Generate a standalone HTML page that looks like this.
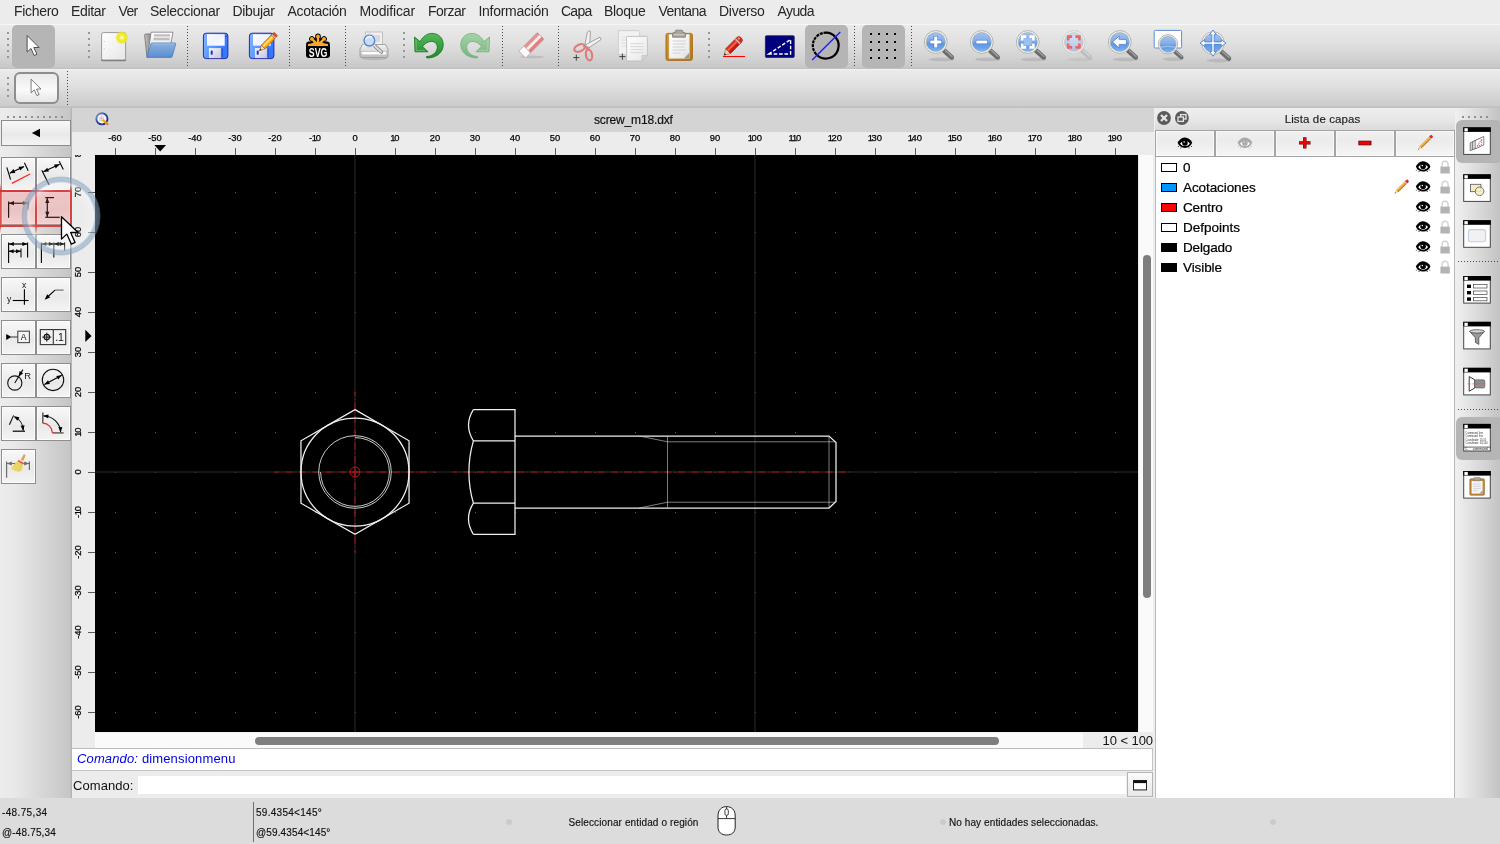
<!DOCTYPE html>
<html lang="es"><head><meta charset="utf-8"><title>screw_m18.dxf</title>
<style>
html,body{margin:0;padding:0;background:#ececec;}
body{width:1500px;height:844px;overflow:hidden;font-family:"Liberation Sans",sans-serif;color:#000;}
#app{position:relative;width:1500px;height:844px;overflow:hidden;background:transparent;will-change:transform;transform:translateZ(0);}
.abs{position:absolute;}
.mi{position:absolute;top:1.5px;height:18px;line-height:18px;font-size:14px;white-space:nowrap;color:#262626;}
svg{position:absolute;overflow:visible;}
.tb1{position:absolute;left:0;top:23.5px;width:1500px;height:44.5px;box-sizing:border-box;border-top:1px solid #f6f6f6;background:linear-gradient(#eaeaea 0,#e1e1e1 40%,#d3d3d3 75%,#c7c7c7 100%);}
.tb2{position:absolute;left:0;top:68.5px;width:1500px;height:38.5px;background:linear-gradient(#ebebeb 0,#e1e1e1 40%,#d4d4d4 72%,#cbcbcb 100%);border-top:1px solid #f2f2f2;box-sizing:border-box;}
.vdots{position:absolute;width:1px;background:repeating-linear-gradient(180deg,#4a4a4a 0,#4a4a4a 1px,transparent 1px,transparent 3px);}
.hdots{position:absolute;height:1px;background:repeating-linear-gradient(90deg,#4a4a4a 0,#4a4a4a 1px,transparent 1px,transparent 3px);}
.lbtn{position:absolute;box-sizing:border-box;border:1px solid #a9a9a9;background:linear-gradient(#f8f8f8,#eeeeee 40%,#e9e9e9 55%,#f4f4f4);}
.lay{position:absolute;left:1183px;margin-top:0.6px;font-size:13.5px;line-height:20px;height:20px;white-space:nowrap;color:#000;-webkit-text-stroke:0.22px #000;}
.sw{position:absolute;left:1161px;width:16px;height:9px;box-sizing:border-box;border:1px solid #000;}
.st{position:absolute;font-size:10px;line-height:12px;white-space:nowrap;color:#111;letter-spacing:0.2px;-webkit-text-stroke:0.15px #111;}
.rl{position:absolute;font-size:9.4px;line-height:10px;white-space:nowrap;color:#000;-webkit-text-stroke:0.25px #000;text-align:center;width:30px;}
.rv{position:absolute;font-size:9.4px;line-height:10px;white-space:nowrap;color:#000;-webkit-text-stroke:0.25px #000;text-align:center;width:30px;height:10px;transform:rotate(-90deg);transform-origin:center center;}
</style></head><body>
<div id="app">
<div class="abs" style="left:0;top:0;width:1500px;height:22px;background:#ececec;"></div>
<div class="mi" id="m_Fichero" style="left:14px;letter-spacing:-0.312px;">Fichero</div>
<div class="mi" id="m_Editar" style="left:71px;letter-spacing:-0.346px;">Editar</div>
<div class="mi" id="m_Ver" style="left:118.5px;letter-spacing:-0.672px;">Ver</div>
<div class="mi" id="m_Seleccionar" style="left:150px;letter-spacing:-0.287px;">Seleccionar</div>
<div class="mi" id="m_Dibujar" style="left:232.5px;letter-spacing:-0.337px;">Dibujar</div>
<div class="mi" id="m_Acotación" style="left:287.5px;letter-spacing:-0.276px;">Acotación</div>
<div class="mi" id="m_Modificar" style="left:359.5px;letter-spacing:-0.144px;">Modificar</div>
<div class="mi" id="m_Forzar" style="left:428px;letter-spacing:-0.492px;">Forzar</div>
<div class="mi" id="m_Información" style="left:478.5px;letter-spacing:-0.287px;">Información</div>
<div class="mi" id="m_Capa" style="left:561px;letter-spacing:-0.742px;">Capa</div>
<div class="mi" id="m_Bloque" style="left:604px;letter-spacing:-0.349px;">Bloque</div>
<div class="mi" id="m_Ventana" style="left:658.5px;letter-spacing:-0.556px;">Ventana</div>
<div class="mi" id="m_Diverso" style="left:719px;letter-spacing:-0.281px;">Diverso</div>
<div class="mi" id="m_Ayuda" style="left:777.5px;letter-spacing:-0.591px;">Ayuda</div>
<svg width="0" height="0" style="left:0;top:0"><defs>
<linearGradient id="gPaper" x1="0" y1="0" x2="1" y2="1"><stop offset="0" stop-color="#ffffff"/><stop offset="1" stop-color="#e6e6e6"/></linearGradient>
<linearGradient id="gFolder" x1="0" y1="0" x2="0" y2="1"><stop offset="0" stop-color="#8ab0e0"/><stop offset="0.5" stop-color="#74a0d8"/><stop offset="1" stop-color="#5a8cd0"/></linearGradient>
<linearGradient id="gFBack" x1="0" y1="0" x2="1" y2="0"><stop offset="0" stop-color="#c4c4c4"/><stop offset="1" stop-color="#7c7c7c"/></linearGradient>
<linearGradient id="gFPaper" x1="0" y1="0" x2="0" y2="1"><stop offset="0" stop-color="#ffffff"/><stop offset="1" stop-color="#d4d4d4"/></linearGradient>
<linearGradient id="gFloppy" x1="0" y1="0" x2="1" y2="0.3"><stop offset="0" stop-color="#86b6ff"/><stop offset="0.45" stop-color="#5a98ff"/><stop offset="1" stop-color="#3478ff"/></linearGradient>
<linearGradient id="gShut" x1="0" y1="0" x2="1" y2="1"><stop offset="0" stop-color="#f6f6f8"/><stop offset="1" stop-color="#c4c6d6"/></linearGradient>
<linearGradient id="gLabel" x1="0" y1="0" x2="1" y2="1"><stop offset="0" stop-color="#ffffff"/><stop offset="0.5" stop-color="#eef2ff"/><stop offset="1" stop-color="#ffffff"/></linearGradient>
<radialGradient id="gGlow"><stop offset="0" stop-color="#ffffff"/><stop offset="0.18" stop-color="#fbf7a0"/><stop offset="0.4" stop-color="#f2ea28"/><stop offset="0.75" stop-color="#f0e820" stop-opacity="0.85"/><stop offset="1" stop-color="#f0e820" stop-opacity="0"/></radialGradient>
<linearGradient id="gUndo" x1="0" y1="0" x2="0" y2="1"><stop offset="0" stop-color="#58b85a"/><stop offset="1" stop-color="#1f8a2c"/></linearGradient>
<linearGradient id="gRedo" x1="0" y1="0" x2="0" y2="1"><stop offset="0" stop-color="#a6d3a8"/><stop offset="1" stop-color="#74b67c"/></linearGradient>
<linearGradient id="gLens" x1="0" y1="0" x2="0" y2="1"><stop offset="0" stop-color="#8ab2ea"/><stop offset="0.5" stop-color="#5c94e2"/><stop offset="0.8" stop-color="#6aa2ea"/><stop offset="1" stop-color="#86b6f0"/></linearGradient>
<radialGradient id="gLensD" cx="0.5" cy="0.25" r="0.8"><stop offset="0" stop-color="#d3e0f2"/><stop offset="1" stop-color="#a9c0e2"/></radialGradient>
<linearGradient id="gClip" x1="0" y1="0" x2="1" y2="1"><stop offset="0" stop-color="#d0902c"/><stop offset="1" stop-color="#b87818"/></linearGradient>
<linearGradient id="gPrn" x1="0" y1="0" x2="0" y2="1"><stop offset="0" stop-color="#f4f4f4"/><stop offset="1" stop-color="#bdbdbd"/></linearGradient>
</defs></svg>
<div class="tb1"></div><div class="tb2"></div>
<div class="abs" style="left:0;top:67.5px;width:1500px;height:1px;background:#c0c0c0;"></div>
<div class="abs" style="left:12px;top:25px;width:43px;height:43px;border-radius:5px;background:#b5b5b5;"></div>
<div class="abs" style="left:805px;top:25px;width:43px;height:43px;border-radius:5px;background:#b5b5b5;"></div>
<div class="abs" style="left:862px;top:25px;width:43px;height:43px;border-radius:5px;background:#b5b5b5;"></div>
<div class="abs" style="left:7px;top:32px;width:2px;height:2px;background:#969696;"></div><div class="abs" style="left:7px;top:38px;width:2px;height:2px;background:#969696;"></div><div class="abs" style="left:7px;top:44px;width:2px;height:2px;background:#969696;"></div><div class="abs" style="left:7px;top:50px;width:2px;height:2px;background:#969696;"></div><div class="abs" style="left:7px;top:56px;width:2px;height:2px;background:#969696;"></div><div class="abs" style="left:88px;top:32px;width:2px;height:2px;background:#969696;"></div><div class="abs" style="left:88px;top:38px;width:2px;height:2px;background:#969696;"></div><div class="abs" style="left:88px;top:44px;width:2px;height:2px;background:#969696;"></div><div class="abs" style="left:88px;top:50px;width:2px;height:2px;background:#969696;"></div><div class="abs" style="left:88px;top:56px;width:2px;height:2px;background:#969696;"></div><div class="abs" style="left:402.5px;top:32px;width:2px;height:2px;background:#969696;"></div><div class="abs" style="left:402.5px;top:38px;width:2px;height:2px;background:#969696;"></div><div class="abs" style="left:402.5px;top:44px;width:2px;height:2px;background:#969696;"></div><div class="abs" style="left:402.5px;top:50px;width:2px;height:2px;background:#969696;"></div><div class="abs" style="left:402.5px;top:56px;width:2px;height:2px;background:#969696;"></div><div class="abs" style="left:708px;top:32px;width:2px;height:2px;background:#969696;"></div><div class="abs" style="left:708px;top:38px;width:2px;height:2px;background:#969696;"></div><div class="abs" style="left:708px;top:44px;width:2px;height:2px;background:#969696;"></div><div class="abs" style="left:708px;top:50px;width:2px;height:2px;background:#969696;"></div><div class="abs" style="left:708px;top:56px;width:2px;height:2px;background:#969696;"></div><div class="abs" style="left:7px;top:77px;width:2px;height:2px;background:#969696;"></div><div class="abs" style="left:7px;top:83px;width:2px;height:2px;background:#969696;"></div><div class="abs" style="left:7px;top:89px;width:2px;height:2px;background:#969696;"></div><div class="abs" style="left:7px;top:95px;width:2px;height:2px;background:#969696;"></div>
<div class="vdots" style="left:187px;top:26px;height:40px;"></div><div class="vdots" style="left:289px;top:26px;height:40px;"></div><div class="vdots" style="left:345px;top:26px;height:40px;"></div><div class="vdots" style="left:502px;top:26px;height:40px;"></div><div class="vdots" style="left:558px;top:26px;height:40px;"></div><div class="vdots" style="left:854px;top:26px;height:40px;"></div><div class="vdots" style="left:911px;top:26px;height:40px;"></div><div class="vdots" style="left:67px;top:71px;height:34px;"></div>
<div class="abs" style="left:14.4px;top:72.2px;width:44.2px;height:32.2px;box-sizing:border-box;border:2px solid #8e8e8e;border-radius:6px;background:linear-gradient(#eaeaea,#f2f2f2 30%,#fafafa 55%,#e6e6e6 100%);"></div>
<svg style="left:20px;top:70px" width="34" height="34" viewBox="0 0 34 34"><path transform="translate(11.1 9.2) scale(0.82)" d="M0 0 L0 16.6 L3.9 13 L7 20 L9.8 18.8 L6.7 12 L12 12 Z" fill="#fff" stroke="#505050" stroke-width="0.9" stroke-linejoin="round"/></svg>
<svg style="left:17px;top:30px" width="32" height="32" viewBox="0 0 32 32"><path transform="translate(10.1 5.5) scale(1.0)" d="M0 0 L0 16.6 L3.9 13 L7 20 L9.8 18.8 L6.7 12 L12 12 Z" fill="#fff" stroke="#505050" stroke-width="1.0" stroke-linejoin="round"/></svg>
<svg style="left:98px;top:29px" width="32" height="34" viewBox="0 0 32 34"><rect x="3.6" y="3.6" width="24" height="27.4" rx="1.6" fill="url(#gPaper)" stroke="#9a9a9a" stroke-width="1"/><path d="M3.4 30.6 Q3.6 31.6 5 31.6 H26.2 Q27.6 31.6 27.8 30.6" stroke="#808080" stroke-width="1.3" fill="none"/><path d="M5.6 12.5h1.3M5.6 19.8h1.3" stroke="#c0c0c0" stroke-width="0.8"/><circle cx="23.9" cy="8.6" r="6.8" fill="url(#gGlow)"/></svg>
<svg style="left:144px;top:29px" width="34" height="32" viewBox="0 0 34 32"><path d="M0.6 6.2 Q0.6 5 1.8 5 H8.4 L4.6 28.2 H3 Z" fill="url(#gFBack)" stroke="#707070" stroke-width="0.8" stroke-linejoin="round"/><path d="M7.1 3.2 H29 L26.8 15 H8 L3.6 26.4 Z" fill="url(#gFPaper)" stroke="#7a7a7a" stroke-width="0.8" stroke-linejoin="round"/><path d="M10 6.4 H26 M9.6 10 H25.6" stroke="#bebebe" stroke-width="2.3"/><path d="M8 14 H31 Q31.9 14 31.7 14.9 L28.2 27.6 Q28 28.4 27 28.4 H3.2 Q2.4 28.4 2.8 27.6 L7 14.8 Q7.2 14 8 14 Z" fill="url(#gFolder)" stroke="#4c7cc2" stroke-width="0.8"/><path d="M8.2 15 H30.6" stroke="#a8c4ea" stroke-width="0.8"/></svg>
<svg style="left:200px;top:29px" width="32" height="32" viewBox="0 0 32 32"><rect x="3.4" y="4.2" width="24.5" height="25.4" rx="2.8" fill="url(#gFloppy)" stroke="#2a2aa8" stroke-width="1"/><rect x="7" y="5.2" width="17.7" height="11.5" fill="url(#gLabel)"/><rect x="8.9" y="19.1" width="12" height="10" fill="url(#gShut)"/><rect x="10.7" y="21.5" width="2" height="4.2" rx="0.6" fill="#1434e0"/><rect x="21.6" y="19.4" width="1.5" height="8.6" fill="#2456e8"/><rect x="25.2" y="6.8" width="1.2" height="1.2" fill="#2a3a9a"/></svg>
<svg style="left:246px;top:29px" width="32" height="32" viewBox="0 0 32 32"><rect x="3.4" y="4.2" width="24.5" height="25.4" rx="2.8" fill="url(#gFloppy)" stroke="#2a2aa8" stroke-width="1"/><rect x="7" y="5.2" width="17.7" height="11.5" fill="url(#gLabel)"/><rect x="8.9" y="19.1" width="12" height="10" fill="url(#gShut)"/><rect x="10.7" y="21.5" width="2" height="4.2" rx="0.6" fill="#1434e0"/><rect x="21.6" y="19.4" width="1.5" height="8.6" fill="#2456e8"/><rect x="25.2" y="6.8" width="1.2" height="1.2" fill="#2a3a9a"/><g transform="translate(13.5 21.8) rotate(-45.9)"><path d="M0 0 L5.4 -2.6 V2.6 Z" fill="#f4e2c0" stroke="#9c3a14" stroke-width="0.5"/><path d="M0 0 L2.1 -1 V1 Z" fill="#333"/><rect x="5.4" y="-2.6" width="14.2" height="5.2" fill="#ffac0a" stroke="#a8401a" stroke-width="0.6"/><rect x="5.6" y="-1.3" width="13.8" height="1.7" fill="#ffe27a"/><rect x="19.6" y="-2.6" width="1.5" height="5.2" fill="#e6d2c2" stroke="#a8401a" stroke-width="0.4"/><rect x="21.1" y="-2.6" width="2.4" height="5.2" rx="1" fill="#e8502c" stroke="#a8401a" stroke-width="0.5"/></g></svg>
<svg style="left:302px;top:30px" width="32" height="32" viewBox="0 0 32 32"><path d="M16 15 L16 6.4" stroke="#000" stroke-width="5.6" stroke-linecap="round"/><path d="M16 15 L9.9 8.9" stroke="#000" stroke-width="5.6" stroke-linecap="round"/><path d="M16 15 L22.1 8.9" stroke="#000" stroke-width="5.6" stroke-linecap="round"/><path d="M16 15 L6.9 14.4" stroke="#000" stroke-width="5.6" stroke-linecap="round"/><path d="M16 15 L25.1 14.4" stroke="#000" stroke-width="5.6" stroke-linecap="round"/><rect x="4" y="13.6" width="24" height="14.4" rx="3" fill="#000"/><path d="M16 15 L16 6.4" stroke="#f9a72b" stroke-width="2.4" stroke-linecap="round"/><circle cx="16" cy="6.4" r="1.9" fill="#f9a72b"/><path d="M16 15 L9.9 8.9" stroke="#f9a72b" stroke-width="2.4" stroke-linecap="round"/><circle cx="9.9" cy="8.9" r="1.9" fill="#f9a72b"/><path d="M16 15 L22.1 8.9" stroke="#f9a72b" stroke-width="2.4" stroke-linecap="round"/><circle cx="22.1" cy="8.9" r="1.9" fill="#f9a72b"/><path d="M6 14 Q10.5 13.6 13 11.4 L16 13.4 L19 11.4 Q21.5 13.6 26 14 V16 H6 Z" fill="#f9a72b"/><text x="16.1" y="26.5" text-anchor="middle" font-family="Liberation Sans, sans-serif" font-weight="bold" font-size="12.6" fill="#fff" textLength="18.6" lengthAdjust="spacingAndGlyphs">SVG</text></svg>
<svg style="left:357px;top:29px" width="34" height="32" viewBox="0 0 34 32"><ellipse cx="17" cy="29.6" rx="13" ry="1.6" fill="#000" opacity="0.12"/><rect x="8.5" y="3" width="17" height="14" fill="#f0f0f0" stroke="#bcbcbc" stroke-width="0.9"/><rect x="13" y="6" width="10" height="7" fill="#dadada"/><path d="M5.5 15.5 H28.5 L31 20 V27 Q31 28.5 29.5 28.5 H4.5 Q3 28.5 3 27 V20 Z" fill="url(#gPrn)" stroke="#9b9b9b" stroke-width="0.9"/><rect x="4.2" y="22.5" width="25.6" height="3.4" fill="#fdfdfd" stroke="#b2b2b2" stroke-width="0.6"/><path d="M17.4 16.6 L24.4 23" stroke="#8a8a8a" stroke-width="3.6" stroke-linecap="round"/><path d="M17.4 16.6 L24.2 22.8" stroke="#e2e2e2" stroke-width="1.8" stroke-linecap="round"/><circle cx="12.4" cy="11.6" r="6.9" fill="#f2f2f2" stroke="#cfcfcf" stroke-width="0.6"/><circle cx="12.4" cy="11.6" r="5.4" fill="#c7dcf6" stroke="#4f7fd0" stroke-width="1.3"/><path d="M8.8 10.4 A4 4 0 0 1 15 8.4" stroke="#fff" stroke-width="1.5" fill="none" opacity="0.8"/></svg>
<svg style="left:413px;top:29px" width="32" height="32" viewBox="0 0 32 32"><path d="M1.5 8 L2 22.8 L15 22.8 L9.6 17.4 C12.6 13.4 17.6 11.4 21.2 13 C25.4 15 25.4 21.4 21 24.8 C19 26.4 16.6 27.4 13.4 27.6 L13.8 29 C22 29 28.6 25 30 18 C31.4 10 26 4.4 19 4.4 C14 4.4 10 7.4 7 12.6 Z" fill="url(#gUndo)" stroke="#1c7a26" stroke-width="0.9" stroke-linejoin="round"/><path d="M3 10.6 L3.2 21.6 L12 21.6" fill="none" stroke="#fff" stroke-opacity="0.35" stroke-width="0.8"/></svg>
<svg style="left:459px;top:29px" width="32" height="32" viewBox="0 0 32 32"><g transform="translate(32 0) scale(-1 1)"><path d="M1.5 8 L2 22.8 L15 22.8 L9.6 17.4 C12.6 13.4 17.6 11.4 21.2 13 C25.4 15 25.4 21.4 21 24.8 C19 26.4 16.6 27.4 13.4 27.6 L13.8 29 C22 29 28.6 25 30 18 C31.4 10 26 4.4 19 4.4 C14 4.4 10 7.4 7 12.6 Z" fill="url(#gRedo)" stroke="#79b582" stroke-width="0.9" stroke-linejoin="round"/><path d="M3 10.6 L3.2 21.6 L12 21.6" fill="none" stroke="#fff" stroke-opacity="0.35" stroke-width="0.8"/></g></svg>
<svg style="left:515px;top:29px" width="32" height="32" viewBox="0 0 32 32"><ellipse cx="17" cy="28" rx="12" ry="1.5" fill="#000" opacity="0.10"/><g transform="translate(7.25 25.5) rotate(-45.4)"><rect x="0" y="-4.8" width="26.3" height="9.6" rx="1.2" fill="#df7f7f" stroke="#c9a0a0" stroke-width="0.7"/><rect x="7" y="-1.7" width="19" height="3" fill="#f6ecec"/><rect x="7" y="-4.4" width="19" height="2.2" fill="#e89a9a" opacity="0.8"/><rect x="0" y="-4.8" width="7" height="9.6" rx="1" fill="#fafafa" stroke="#c4b4b4" stroke-width="0.7"/></g></svg>
<svg style="left:570px;top:28px" width="34" height="34" viewBox="0 0 34 34"><path d="M14.6 18.6 L17.4 4 Q18.6 2.4 20.4 3.2 L19.4 20.4 Z" fill="#f4f4f4" stroke="#8f8f8f" stroke-width="0.8" stroke-linejoin="round"/><path d="M15 17 L30 9.2 L31 11.6 L19 19.6 Z" fill="#f4f4f4" stroke="#8f8f8f" stroke-width="0.8" stroke-linejoin="round"/><ellipse cx="9.6" cy="20" rx="5.6" ry="3.3" transform="rotate(-24 9.6 20)" fill="none" stroke="#e07c7c" stroke-width="2.2"/><ellipse cx="19" cy="27" rx="3.1" ry="5.4" transform="rotate(-10 19 27)" fill="none" stroke="#e07c7c" stroke-width="2.2"/><path d="M13.6 17.6 L18.4 21.6" stroke="#e07c7c" stroke-width="2.4"/><path d="M3.2 29.6h6.2M6.3 26.5v6.2" stroke="#333" stroke-width="0.9"/></svg>
<svg style="left:616px;top:28px" width="34" height="34" viewBox="0 0 34 34"><path d="M2.4 2.6 H22.6 Q23.6 2.6 23.6 3.6 V26.4 H2.4 Z" fill="#f2f2f2" stroke="#cdcdcd" stroke-width="0.9"/><path d="M5.6 9h7M5.6 12h7M5.6 15h7M5.6 18h7" stroke="#dedede" stroke-width="1"/><path d="M11.6 8.4 H30.4 Q31.4 8.4 31.4 9.4 V27.4 L26 33 H11.6 Q10.6 33 10.6 32 V9.4 Q10.6 8.4 11.6 8.4 Z" fill="url(#gPaper)" stroke="#bdbdbd" stroke-width="0.9"/><path d="M31.4 27.4 H26 V33 Z" fill="#d6d6d6" stroke="#bdbdbd" stroke-width="0.7"/><path d="M14.6 15.6h13M14.6 18.6h13M14.6 21.6h13M14.6 24.6h13" stroke="#d4d4d4" stroke-width="0.9"/><path d="M3.3 28.6h6.2M6.4 25.5v6.2" stroke="#333" stroke-width="0.9"/></svg>
<svg style="left:662px;top:28px" width="34" height="34" viewBox="0 0 34 34"><rect x="4" y="5.4" width="26.4" height="27" rx="1.8" fill="url(#gClip)" stroke="#a86a14" stroke-width="0.9"/><path d="M7 6.4 H27.4 V30.4 H7 Z" fill="url(#gPaper)" stroke="#d8d8d8" stroke-width="0.5"/><path d="M27.4 24.6 V30.4 H21.6 Z" fill="#9a9a9a"/><path d="M27.4 24.6 H21.6 V30.4 Z" fill="#e4e4e4"/><path d="M10.6 13h13M10.6 16h13M10.6 19h11.6M10.6 22h13M10.6 25h8" stroke="#cdcdcd" stroke-width="0.9"/><path d="M10.6 9.2 V5.6 Q10.6 4.6 11.8 4.6 H13.2 V3.2 Q13.2 2.2 14.4 2.2 H19.6 Q20.8 2.2 20.8 3.2 V4.6 H22.2 Q23.4 4.6 23.4 5.6 V9.2 Z" fill="#a6a69a" stroke="#7c7c72" stroke-width="0.8"/><rect x="11.8" y="6" width="10.4" height="1.4" fill="#c9c9c0"/></svg>
<svg style="left:718px;top:29px" width="32" height="32" viewBox="0 0 32 32"><path d="M5 27.5 H27" stroke="#f00" stroke-width="1.1"/><g transform="translate(6 26.3) rotate(-45.5)"><path d="M0 0 L6 -3.3 V3.3 Z" fill="#ecd2a2" stroke="#7a5a2a" stroke-width="0.5"/><path d="M0 0 L2.2 -1.2 V1.2 Z" fill="#222"/><path d="M6 -3.4 H21.4 Q24.6 -3.4 24.6 0 Q24.6 3.4 21.4 3.4 H6 Z" fill="#e0261a" stroke="#7a3a1a" stroke-width="0.6"/><rect x="6.2" y="-1.6" width="12.4" height="1.8" fill="#f0644c"/><rect x="6.2" y="1.4" width="12.4" height="1.6" fill="#b81a10"/><rect x="18.8" y="-3.2" width="1.6" height="6.4" fill="#c4b4b4"/><circle cx="22.4" cy="-1.2" r="1.2" fill="#ff8a7a"/></g></svg>
<svg style="left:764px;top:30px" width="32" height="32" viewBox="0 0 32 32"><rect x="1.4" y="5.8" width="28.8" height="21.6" rx="1" fill="#00007e" stroke="#23235e" stroke-width="0.9"/><path d="M4.6 24 L26.6 9.6 V24 Z" fill="none" stroke="#fff" stroke-width="1.4" stroke-dasharray="3.6 1.8"/></svg>
<svg style="left:810px;top:30px" width="32" height="32" viewBox="0 0 32 32"><path d="M13.5 2.9 A12.9 12.9 0 1 1 6.2 24.3" fill="none" stroke="#000" stroke-width="2.2"/><path d="M6.2 24.3 A12.9 12.9 0 0 1 13.5 2.9" fill="none" stroke="#000" stroke-width="2.2" stroke-dasharray="3 0.9"/><path d="M2.2 30 L30.3 2" stroke="#1a1aff" stroke-width="1.3"/></svg>
<svg style="left:0px;top:0px" width="1500" height="70" viewBox="0 0 1500 70"><rect x="870" y="33" width="2" height="2" fill="#000"/><rect x="870" y="41" width="2" height="2" fill="#000"/><rect x="870" y="49" width="2" height="2" fill="#000"/><rect x="870" y="57" width="2" height="2" fill="#000"/><rect x="878" y="33" width="2" height="2" fill="#000"/><rect x="878" y="41" width="2" height="2" fill="#000"/><rect x="878" y="49" width="2" height="2" fill="#000"/><rect x="878" y="57" width="2" height="2" fill="#000"/><rect x="886" y="33" width="2" height="2" fill="#000"/><rect x="886" y="41" width="2" height="2" fill="#000"/><rect x="886" y="49" width="2" height="2" fill="#000"/><rect x="886" y="57" width="2" height="2" fill="#000"/><rect x="894" y="33" width="2" height="2" fill="#000"/><rect x="894" y="41" width="2" height="2" fill="#000"/><rect x="894" y="49" width="2" height="2" fill="#000"/><rect x="894" y="57" width="2" height="2" fill="#000"/></svg>
<svg style="left:920.4px;top:28.8px" width="36" height="34" viewBox="0 0 36 34"><ellipse cx="21.8" cy="30.4" rx="12.5" ry="1.9" fill="#000" opacity="0.1"/><path d="M24.4 21.9 L31.6 28.3" stroke="#6c6c6c" stroke-width="4.8" stroke-linecap="round"/><path d="M25.4 21.6 L32.0 27.4" stroke="#a2a2a2" stroke-width="1.3" stroke-linecap="round"/><circle cx="15.8" cy="13" r="11.4" fill="#f2f2ee" stroke="#a6a69e" stroke-width="0.8"/><circle cx="15.8" cy="13" r="9.6" fill="url(#gLens)" stroke="#a6a69e" stroke-width="0.5"/><path d="M6.4 13.4 A9.4 9.4 0 0 1 25.200000000000003 13.4 Z" fill="#fff" opacity="0.22"/><path d="M9.8 13h12M15.8 7v12" stroke="#3f74c8" stroke-width="4.4"/><path d="M10.3 13h11M15.8 7.5v11" stroke="#fff" stroke-width="3.2"/></svg>
<svg style="left:966.4px;top:28.8px" width="36" height="34" viewBox="0 0 36 34"><ellipse cx="21.8" cy="30.4" rx="12.5" ry="1.9" fill="#000" opacity="0.1"/><path d="M24.4 21.9 L31.6 28.3" stroke="#6c6c6c" stroke-width="4.8" stroke-linecap="round"/><path d="M25.4 21.6 L32.0 27.4" stroke="#a2a2a2" stroke-width="1.3" stroke-linecap="round"/><circle cx="15.8" cy="13" r="11.4" fill="#f2f2ee" stroke="#a6a69e" stroke-width="0.8"/><circle cx="15.8" cy="13" r="9.6" fill="url(#gLens)" stroke="#a6a69e" stroke-width="0.5"/><path d="M6.4 13.4 A9.4 9.4 0 0 1 25.200000000000003 13.4 Z" fill="#fff" opacity="0.22"/><path d="M9.8 13h12" stroke="#3f74c8" stroke-width="4.2"/><path d="M10.3 13h11" stroke="#fff" stroke-width="3"/></svg>
<svg style="left:1012.4px;top:28.8px" width="36" height="34" viewBox="0 0 36 34"><ellipse cx="21.8" cy="30.4" rx="12.5" ry="1.9" fill="#000" opacity="0.1"/><path d="M24.4 21.9 L31.6 28.3" stroke="#6c6c6c" stroke-width="4.8" stroke-linecap="round"/><path d="M25.4 21.6 L32.0 27.4" stroke="#a2a2a2" stroke-width="1.3" stroke-linecap="round"/><circle cx="15.8" cy="13" r="11.4" fill="#f2f2ee" stroke="#a6a69e" stroke-width="0.8"/><circle cx="15.8" cy="13" r="9.6" fill="url(#gLens)" stroke="#a6a69e" stroke-width="0.5"/><path d="M6.4 13.4 A9.4 9.4 0 0 1 25.200000000000003 13.4 Z" fill="#fff" opacity="0.22"/><rect x="12" y="9.4" width="7.6" height="7.2" fill="#9cc0f0"/><path d="M10.2 11.6V7.6H14.2M17.4 7.6H21.4V11.6M21.4 14.4V18.4H17.4M14.2 18.4H10.2V14.4" stroke="#fff" stroke-width="2.6" fill="none"/></svg>
<svg style="left:1058.4px;top:28.8px" width="36" height="34" viewBox="0 0 36 34"><ellipse cx="21.8" cy="30.4" rx="12.5" ry="1.9" fill="#000" opacity="0.05"/><path d="M24.4 21.9 L31.6 28.3" stroke="#bdbdbd" stroke-width="4.8" stroke-linecap="round"/><path d="M25.4 21.6 L32.0 27.4" stroke="#d6d6d6" stroke-width="1.3" stroke-linecap="round"/><circle cx="15.8" cy="13" r="11.4" fill="#f2f2ee" stroke="#c4c4be" stroke-width="0.8"/><circle cx="15.8" cy="13" r="9.6" fill="url(#gLensD)" stroke="#c4c4be" stroke-width="0.5"/><path d="M10.2 11.6V7.6H14.2M17.4 7.6H21.4V11.6M21.4 14.4V18.4H17.4M14.2 18.4H10.2V14.4" stroke="#ee6464" stroke-width="2.6" fill="none"/></svg>
<svg style="left:1104.4px;top:28.8px" width="36" height="34" viewBox="0 0 36 34"><ellipse cx="21.8" cy="30.4" rx="12.5" ry="1.9" fill="#000" opacity="0.1"/><path d="M24.4 21.9 L31.6 28.3" stroke="#6c6c6c" stroke-width="4.8" stroke-linecap="round"/><path d="M25.4 21.6 L32.0 27.4" stroke="#a2a2a2" stroke-width="1.3" stroke-linecap="round"/><circle cx="15.8" cy="13" r="11.4" fill="#f2f2ee" stroke="#a6a69e" stroke-width="0.8"/><circle cx="15.8" cy="13" r="9.6" fill="url(#gLens)" stroke="#a6a69e" stroke-width="0.5"/><path d="M6.4 13.4 A9.4 9.4 0 0 1 25.200000000000003 13.4 Z" fill="#fff" opacity="0.22"/><path d="M8.6 13 L15.2 7 V10.6 H22.4 V15.4 H15.2 V19 Z" fill="#fff" stroke="#3f74c8" stroke-width="0.7"/></svg>
<svg style="left:1151px;top:29px" width="38" height="34" viewBox="0 0 38 34"><rect x="3.2" y="1.4" width="27.4" height="17.6" rx="1.2" fill="#fff" stroke="#5d8bd6" stroke-width="1"/><ellipse cx="22.1" cy="30.09" rx="10.625" ry="1.9" fill="#000" opacity="0.1"/><path d="M24.31 22.865000000000002 L30.43 28.305" stroke="#6c6c6c" stroke-width="4.08" stroke-linecap="round"/><path d="M25.16 22.61 L30.77 27.54" stroke="#a2a2a2" stroke-width="1.3" stroke-linecap="round"/><circle cx="17" cy="15.3" r="9.69" fill="#f2f2ee" stroke="#a6a69e" stroke-width="0.8"/><circle cx="17" cy="15.3" r="8.16" fill="url(#gLens)" stroke="#a6a69e" stroke-width="0.5"/><path d="M9.01 15.700000000000001 A7.99 7.99 0 0 1 24.990000000000002 15.700000000000001 Z" fill="#fff" opacity="0.22"/><path d="M9.2 17.6 Q17 15.4 24.8 17.6 L24.6 18.8 Q17 17 9.4 18.8 Z" fill="#fff" opacity="0.35"/></svg>
<svg style="left:1197px;top:29px" width="38" height="34" viewBox="0 0 38 34"><ellipse cx="22.0" cy="31.5" rx="12.5" ry="1.9" fill="#000" opacity="0.1"/><path d="M24.6 23.0 L31.8 29.4" stroke="#6c6c6c" stroke-width="4.8" stroke-linecap="round"/><path d="M25.6 22.7 L32.2 28.5" stroke="#a2a2a2" stroke-width="1.3" stroke-linecap="round"/><circle cx="16" cy="14.1" r="11.4" fill="#f2f2ee" stroke="#a6a69e" stroke-width="0.8"/><circle cx="16" cy="14.1" r="9.6" fill="url(#gLens)" stroke="#a6a69e" stroke-width="0.5"/><path d="M6.6 14.5 A9.4 9.4 0 0 1 25.4 14.5 Z" fill="#fff" opacity="0.22"/><g fill="#fff" stroke="#4a7fd0" stroke-width="0.9" stroke-linejoin="round"><path d="M16 1 L19.4 5.8 H17.2 V12.9 H24.2 V10.7 L29 14.1 L24.2 17.5 V15.3 H17.2 V22.4 H19.4 L16 27.2 L12.6 22.4 H14.8 V15.3 H7.8 V17.5 L3 14.1 L7.8 10.7 V12.9 H14.8 V5.8 H12.6 Z"/></g></svg>
<div class="abs" style="left:0;top:108px;width:72px;height:690px;background:linear-gradient(90deg,#ececec 0,#e9e9e9 20%,#d6d6d6 60%,#c6c6c6 97%,#b0b0b0 100%);"></div>
<div class="abs" style="left:7px;top:116px;width:2px;height:2px;background:#909090;"></div><div class="abs" style="left:13px;top:116px;width:2px;height:2px;background:#909090;"></div><div class="abs" style="left:19px;top:116px;width:2px;height:2px;background:#909090;"></div><div class="abs" style="left:25px;top:116px;width:2px;height:2px;background:#909090;"></div><div class="abs" style="left:31px;top:116px;width:2px;height:2px;background:#909090;"></div><div class="abs" style="left:37px;top:116px;width:2px;height:2px;background:#909090;"></div><div class="abs" style="left:43px;top:116px;width:2px;height:2px;background:#909090;"></div><div class="abs" style="left:49px;top:116px;width:2px;height:2px;background:#909090;"></div><div class="abs" style="left:55px;top:116px;width:2px;height:2px;background:#909090;"></div><div class="abs" style="left:61px;top:116px;width:2px;height:2px;background:#909090;"></div>
<div class="lbtn" style="left:1px;top:120px;width:70px;height:26px;border-color:#8c8c8c;"></div>
<svg style="left:31px;top:128px" width="10" height="10" viewBox="0 0 10 10"><path d="M0.8 5 L9 0.8 V9.2 Z" fill="#000"/></svg>
<div class="lbtn" style="left:1.4px;top:156.8px;width:34.4px;height:34.3px;border-color:#8e8e8e;box-shadow:inset 0 0 0 1px rgba(255,255,255,0.7);"></div><div class="lbtn" style="left:36.4px;top:156.8px;width:34.4px;height:34.3px;border-color:#8e8e8e;box-shadow:inset 0 0 0 1px rgba(255,255,255,0.7);"></div>
<div class="lbtn" style="left:1.4px;top:191.1px;width:34.4px;height:34.3px;border-color:#8e8e8e;box-shadow:inset 0 0 0 1px rgba(255,255,255,0.7);"></div><div class="lbtn" style="left:36.4px;top:191.1px;width:34.4px;height:34.3px;border-color:#8e8e8e;box-shadow:inset 0 0 0 1px rgba(255,255,255,0.7);"></div>
<div class="lbtn" style="left:1.4px;top:234.4px;width:34.4px;height:34.3px;border-color:#8e8e8e;box-shadow:inset 0 0 0 1px rgba(255,255,255,0.7);"></div><div class="lbtn" style="left:36.4px;top:234.4px;width:34.4px;height:34.3px;border-color:#8e8e8e;box-shadow:inset 0 0 0 1px rgba(255,255,255,0.7);"></div>
<div class="lbtn" style="left:1.4px;top:277.3px;width:34.4px;height:34.3px;border-color:#8e8e8e;box-shadow:inset 0 0 0 1px rgba(255,255,255,0.7);"></div><div class="lbtn" style="left:36.4px;top:277.3px;width:34.4px;height:34.3px;border-color:#8e8e8e;box-shadow:inset 0 0 0 1px rgba(255,255,255,0.7);"></div>
<div class="lbtn" style="left:1.4px;top:320.3px;width:34.4px;height:34.3px;border-color:#8e8e8e;box-shadow:inset 0 0 0 1px rgba(255,255,255,0.7);"></div><div class="lbtn" style="left:36.4px;top:320.3px;width:34.4px;height:34.3px;border-color:#8e8e8e;box-shadow:inset 0 0 0 1px rgba(255,255,255,0.7);"></div>
<div class="lbtn" style="left:1.4px;top:363.3px;width:34.4px;height:34.3px;border-color:#8e8e8e;box-shadow:inset 0 0 0 1px rgba(255,255,255,0.7);"></div><div class="lbtn" style="left:36.4px;top:363.3px;width:34.4px;height:34.3px;border-color:#8e8e8e;box-shadow:inset 0 0 0 1px rgba(255,255,255,0.7);"></div>
<div class="lbtn" style="left:1.4px;top:406.3px;width:34.4px;height:34.3px;border-color:#8e8e8e;box-shadow:inset 0 0 0 1px rgba(255,255,255,0.7);"></div><div class="lbtn" style="left:36.4px;top:406.3px;width:34.4px;height:34.3px;border-color:#8e8e8e;box-shadow:inset 0 0 0 1px rgba(255,255,255,0.7);"></div>
<div class="lbtn" style="left:1.4px;top:449.3px;width:34.4px;height:34.3px;border-color:#8e8e8e;box-shadow:inset 0 0 0 1px rgba(255,255,255,0.7);"></div>
<div class="abs" style="left:0;top:190px;width:72px;height:37px;background:linear-gradient(rgba(226,120,120,0.42),rgba(240,150,150,0.36));"></div>
<div class="abs" style="left:0;top:189.5px;width:74px;height:2.2px;background:linear-gradient(90deg,rgba(214,50,50,0.9) 0,rgba(214,50,50,0.9) 94%,rgba(230,80,80,0));"></div>
<div class="abs" style="left:0;top:225px;width:80px;height:2.2px;background:linear-gradient(90deg,rgba(214,50,50,0.9) 0,rgba(214,50,50,0.9) 88%,rgba(240,120,120,0));"></div>
<div class="abs" style="left:35px;top:183px;width:2.2px;height:52px;background:linear-gradient(rgba(214,50,50,0),rgba(214,50,50,0.9) 14%,rgba(214,50,50,0.9) 84%,rgba(214,50,50,0));"></div>
<div class="abs" style="left:70px;top:183px;width:2px;height:50px;background:linear-gradient(rgba(214,50,50,0),rgba(214,50,50,0.85) 14%,rgba(214,50,50,0.85) 86%,rgba(214,50,50,0));"></div>
<div class="abs" style="left:0;top:183px;width:1px;height:50px;background:linear-gradient(rgba(214,50,50,0),rgba(214,50,50,0.8) 14%,rgba(214,50,50,0.8) 86%,rgba(214,50,50,0));"></div>
<svg style="left:0;top:0" width="72" height="500" viewBox="0 0 72 500"><path d="M9.70 173.20L24.10 166.40" stroke="#000" stroke-width="1.1" fill="none"/><path d="M24.10 166.40L20.29 170.52L18.50 166.72Z" fill="#000"/><path d="M9.70 173.20L13.51 169.08L15.30 172.88Z" fill="#000"/><path d="M6.80 167.40L10.60 179.60" stroke="#000" stroke-width="1.1" fill="none"/><path d="M24.40 162.80L28.20 170.80" stroke="#000" stroke-width="1.1" fill="none"/><path d="M11.90 183.40L30.10 174.00" stroke="#f22" stroke-width="1.2" fill="none"/><path d="M43.40 171.80L59.60 164.30" stroke="#000" stroke-width="1.1" fill="none"/><path d="M59.60 164.30L55.76 168.39L54.00 164.58Z" fill="#000"/><path d="M43.40 171.80L47.24 167.71L49.00 171.52Z" fill="#000"/><path d="M41.80 170.20L49.20 184.90" stroke="#000" stroke-width="1.1" fill="none"/><path d="M59.20 161.30L63.30 169.40" stroke="#000" stroke-width="1.1" fill="none"/><path d="M8.60 201.40L8.60 217.80" stroke="#2a1414" stroke-width="1.2" fill="none"/><path d="M28.20 201.20L28.20 209.40" stroke="#6d5a5a" stroke-width="1.2" fill="none"/><path d="M8.60 203.20L24.00 203.20" stroke="#2a1414" stroke-width="1.1" fill="none"/><path d="M8.80 203.20L14.00 201.10L14.00 205.30Z" fill="#2a1414"/><path d="M28.00 203.20L22.80 205.30L22.80 201.10Z" fill="#6d5a5a"/><path d="M45.20 197.60L54.00 197.60" stroke="#2a1414" stroke-width="1.2" fill="none"/><path d="M45.20 217.30L59.80 217.30" stroke="#2a1414" stroke-width="1.2" fill="none"/><path d="M47.30 197.90L47.30 217.00" stroke="#2a1414" stroke-width="1.2" fill="none"/><path d="M47.30 217.00L45.20 211.80L49.40 211.80Z" fill="#2a1414"/><path d="M47.30 197.90L49.40 203.10L45.20 203.10Z" fill="#2a1414"/><path d="M8.60 242.40L8.60 263.00" stroke="#000" stroke-width="1.1" fill="none"/><path d="M27.60 242.40L27.60 257.60" stroke="#000" stroke-width="1.1" fill="none"/><path d="M21.00 248.60L21.00 257.60" stroke="#333" stroke-width="1.3" fill="none"/><path d="M8.80 244.00L27.40 244.00" stroke="#000" stroke-width="1.2" fill="none"/><path d="M27.40 244.00L22.40 246.00L22.40 242.00Z" fill="#000"/><path d="M8.80 244.00L13.80 242.00L13.80 246.00Z" fill="#000"/><path d="M8.80 251.20L20.80 251.20" stroke="#000" stroke-width="1.2" fill="none"/><path d="M20.80 251.20L16.00 253.20L16.00 249.20Z" fill="#000"/><path d="M8.80 251.20L13.60 249.20L13.60 253.20Z" fill="#000"/><path d="M41.40 242.40L41.40 263.00" stroke="#000" stroke-width="1.1" fill="none"/><path d="M53.80 242.40L53.80 257.60" stroke="#333" stroke-width="1.3" fill="none"/><path d="M64.60 242.40L64.60 250.40" stroke="#000" stroke-width="1.1" fill="none"/><path d="M41.60 244.00L53.60 244.00" stroke="#000" stroke-width="1.2" fill="none"/><path d="M53.60 244.00L48.80 246.00L48.80 242.00Z" fill="#000"/><path d="M41.60 244.00L46.40 242.00L46.40 246.00Z" fill="#000"/><path d="M54.00 244.00L64.40 244.00" stroke="#000" stroke-width="1.2" fill="none"/><path d="M64.40 244.00L59.60 246.00L59.60 242.00Z" fill="#000"/><path d="M54.00 244.00L58.80 242.00L58.80 246.00Z" fill="#000"/><path d="M24.40 289.20L24.40 304.80" stroke="#000" stroke-width="1.1" fill="none"/><path d="M12.70 300.50L28.60 300.50" stroke="#000" stroke-width="1.1" fill="none"/><text x="24.2" y="287.6" text-anchor="middle" font-size="8.5" font-family="Liberation Sans, sans-serif" fill="#111">x</text><text x="9.2" y="302" text-anchor="middle" font-size="8.5" font-family="Liberation Sans, sans-serif" fill="#111">y</text><path d="M46.40 298.00L55.00 290.10" stroke="#000" stroke-width="1.1" fill="none"/><path d="M55.00 290.10L63.60 290.10" stroke="#666" stroke-width="1.1" fill="none"/><path d="M44.60 299.70L47.23 294.29L50.21 297.53Z" fill="#000"/><path d="M6.2 334 L11.4 337 L6.2 340 Z" fill="#000"/><path d="M11.00 337.00L17.80 337.00" stroke="#777" stroke-width="1.6" fill="none"/><rect x="17.8" y="331.2" width="11.6" height="11.4" fill="#f4f4f4" stroke="#4a4a4a" stroke-width="1.1"/><text x="23.6" y="340.2" text-anchor="middle" font-size="8.6" font-family="Liberation Sans, sans-serif" fill="#111">A</text><rect x="40.3" y="329.6" width="25.4" height="15" fill="#f2f2f2" stroke="#333" stroke-width="1.1"/><path d="M53.30 329.60L53.30 344.60" stroke="#333" stroke-width="1.1" fill="none"/><circle cx="46.8" cy="337.1" r="2.7" fill="none" stroke="#111" stroke-width="1.1"/><path d="M42.30 337.10L51.30 337.10" stroke="#111" stroke-width="1" fill="none"/><path d="M46.80 332.60L46.80 341.60" stroke="#111" stroke-width="1" fill="none"/><text x="59.6" y="341.2" text-anchor="middle" font-size="10.5" font-family="Liberation Sans, sans-serif" fill="#111">.1</text><circle cx="14.8" cy="383" r="7.1" fill="none" stroke="#111" stroke-width="1.1"/><path d="M14.80 383.00L22.90 369.60" stroke="#111" stroke-width="1.1" fill="none"/><path d="M18.60 376.80L19.60 371.09L23.19 373.27Z" fill="#000"/><text x="27.6" y="379.2" text-anchor="middle" font-size="9.4" font-family="Liberation Sans, sans-serif" fill="#111">R</text><circle cx="53" cy="379.9" r="10.7" fill="none" stroke="#111" stroke-width="1.1"/><path d="M44.40 384.60L61.80 375.20" stroke="#000" stroke-width="1.1" fill="none"/><path d="M61.80 375.20L58.18 379.43L56.27 375.91Z" fill="#000"/><path d="M44.40 384.60L48.02 380.37L49.93 383.89Z" fill="#000"/><path d="M9.40 424.80L13.60 415.40" stroke="#111" stroke-width="1.1" fill="none"/><path d="M12.70 431.20L25.00 431.20" stroke="#111" stroke-width="1.3" fill="none"/><path d="M14.6 417 A14.4 14.4 0 0 1 23.2 430.6" fill="none" stroke="#111" stroke-width="1.1"/><path d="M13.80 416.20L19.44 417.37L17.32 420.76Z" fill="#000"/><path d="M23.30 430.90L20.57 425.83L24.53 425.27Z" fill="#000"/><path d="M42.80 412.40L42.80 423.20" stroke="#666" stroke-width="1.6" fill="none"/><path d="M52.40 432.90L63.60 432.90" stroke="#666" stroke-width="1.6" fill="none"/><path d="M42.8 423.2 A9.8 9.8 0 0 1 52.4 432.9" fill="none" stroke="#f22" stroke-width="1.2"/><path d="M43.6 416 A17 17 0 0 1 60.6 432" fill="none" stroke="#111" stroke-width="1.1"/><path d="M43.00 415.80L48.58 414.38L48.16 418.35Z" fill="#000"/><path d="M60.70 432.60L58.33 427.35L62.32 427.07Z" fill="#000"/><path d="M6.60 461.40L6.60 477.80" stroke="#6e6e6e" stroke-width="1.2" fill="none"/><path d="M29.40 461.40L29.40 470.00" stroke="#6e6e6e" stroke-width="1.2" fill="none"/><path d="M6.60 463.50L29.40 463.50" stroke="#6e6e6e" stroke-width="1.1" fill="none"/><path d="M6.80 463.50L11.80 461.40L11.80 465.60Z" fill="#6e6e6e"/><path d="M29.20 463.50L24.20 465.60L24.20 461.40Z" fill="#6e6e6e"/><path d="M23.6 454.6 Q24.9 454 25.7 455.2 L23.2 461 L20.8 459.8 Z" fill="#d9a556"/><path d="M18.6 459.6 L23.6 462.6 L21.8 471 Q17 473.4 10.8 468.2 Z" fill="#ecd96a"/><path d="M12.8 467.4 L19 461.6 M15.4 469.6 L20.6 462.6 M18.4 471 L22 463.6" stroke="#d8c04c" stroke-width="0.6"/><path d="M18.2 460.6 L23.4 463.8" stroke="#e4525c" stroke-width="1.6"/></svg>
<div class="abs" style="left:0;top:106px;width:1500px;height:2px;background:linear-gradient(#c6c6c6,#bdbdbd);"></div>
<div class="abs" style="left:72px;top:108px;width:1082px;height:24px;background:#d4d4d4;"></div>
<div class="abs" id="title" style="left:533.4px;top:113.3px;width:200px;text-align:center;font-size:12px;line-height:14px;color:#111;-webkit-text-stroke:0.2px #111;white-space:nowrap;letter-spacing:-0.146px;">screw_m18.dxf</div>
<svg style="left:94px;top:111px" width="16" height="16" viewBox="0 0 16 16">
<defs><linearGradient id="gQ" x1="0" y1="0" x2="1" y2="1"><stop offset="0" stop-color="#8e9ed4"/><stop offset="0.45" stop-color="#2f4496"/><stop offset="1" stop-color="#1c2f80"/></linearGradient></defs>
<circle cx="7.9" cy="7.8" r="5.6" fill="#f6f6f8" stroke="url(#gQ)" stroke-width="1.9"/>
<path d="M7.3 4.2v6M4.6 7.2h5.4" stroke="#b0b0b8" stroke-width="0.7"/><path d="M5 9.2h3M8.4 4.8l1 1.6" stroke="#e6a0a0" stroke-width="0.6"/>
<path d="M8.6 8.6 L13 12.8" stroke="#f2a21c" stroke-width="2.2" stroke-linecap="butt"/>
<path d="M8.2 8.2 l1.6 .3 -1.3 1.3z" fill="#f4dca0"/>
<circle cx="13.4" cy="13.2" r="1.1" fill="#e46a6a"/>
</svg>
<div class="abs" style="left:72px;top:132px;width:1081px;height:23px;background:#ececec;"></div>
<div class="abs" style="left:72px;top:155px;width:23px;height:577px;background:#ececec;"></div>
<div class="rl" style="left:100px;top:133px;">-60</div><div class="abs" style="left:115px;top:148px;width:1px;height:7px;background:#5a5a5a;"></div>
<div class="rl" style="left:140px;top:133px;">-50</div><div class="abs" style="left:155px;top:148px;width:1px;height:7px;background:#5a5a5a;"></div>
<div class="rl" style="left:180px;top:133px;">-40</div><div class="abs" style="left:195px;top:148px;width:1px;height:7px;background:#5a5a5a;"></div>
<div class="rl" style="left:220px;top:133px;">-30</div><div class="abs" style="left:235px;top:148px;width:1px;height:7px;background:#5a5a5a;"></div>
<div class="rl" style="left:260px;top:133px;">-20</div><div class="abs" style="left:275px;top:148px;width:1px;height:7px;background:#5a5a5a;"></div>
<div class="rl" style="left:300px;top:133px;">-<span style="letter-spacing:-1.3px;margin-left:-0.4px">1</span>0</div><div class="abs" style="left:315px;top:148px;width:1px;height:7px;background:#5a5a5a;"></div>
<div class="rl" style="left:340px;top:133px;">0</div><div class="abs" style="left:355px;top:148px;width:1px;height:7px;background:#5a5a5a;"></div>
<div class="rl" style="left:380px;top:133px;"><span style="letter-spacing:-1.3px;margin-left:-0.4px">1</span>0</div><div class="abs" style="left:395px;top:148px;width:1px;height:7px;background:#5a5a5a;"></div>
<div class="rl" style="left:420px;top:133px;">20</div><div class="abs" style="left:435px;top:148px;width:1px;height:7px;background:#5a5a5a;"></div>
<div class="rl" style="left:460px;top:133px;">30</div><div class="abs" style="left:475px;top:148px;width:1px;height:7px;background:#5a5a5a;"></div>
<div class="rl" style="left:500px;top:133px;">40</div><div class="abs" style="left:515px;top:148px;width:1px;height:7px;background:#5a5a5a;"></div>
<div class="rl" style="left:540px;top:133px;">50</div><div class="abs" style="left:555px;top:148px;width:1px;height:7px;background:#5a5a5a;"></div>
<div class="rl" style="left:580px;top:133px;">60</div><div class="abs" style="left:595px;top:148px;width:1px;height:7px;background:#5a5a5a;"></div>
<div class="rl" style="left:620px;top:133px;">70</div><div class="abs" style="left:635px;top:148px;width:1px;height:7px;background:#5a5a5a;"></div>
<div class="rl" style="left:660px;top:133px;">80</div><div class="abs" style="left:675px;top:148px;width:1px;height:7px;background:#5a5a5a;"></div>
<div class="rl" style="left:700px;top:133px;">90</div><div class="abs" style="left:715px;top:148px;width:1px;height:7px;background:#5a5a5a;"></div>
<div class="rl" style="left:740px;top:133px;"><span style="letter-spacing:-1.3px;margin-left:-0.4px">1</span>00</div><div class="abs" style="left:755px;top:148px;width:1px;height:7px;background:#5a5a5a;"></div>
<div class="rl" style="left:780px;top:133px;"><span style="letter-spacing:-1.3px;margin-left:-0.4px">1</span><span style="letter-spacing:-1.3px;margin-left:-0.4px">1</span>0</div><div class="abs" style="left:795px;top:148px;width:1px;height:7px;background:#5a5a5a;"></div>
<div class="rl" style="left:820px;top:133px;"><span style="letter-spacing:-1.3px;margin-left:-0.4px">1</span>20</div><div class="abs" style="left:835px;top:148px;width:1px;height:7px;background:#5a5a5a;"></div>
<div class="rl" style="left:860px;top:133px;"><span style="letter-spacing:-1.3px;margin-left:-0.4px">1</span>30</div><div class="abs" style="left:875px;top:148px;width:1px;height:7px;background:#5a5a5a;"></div>
<div class="rl" style="left:900px;top:133px;"><span style="letter-spacing:-1.3px;margin-left:-0.4px">1</span>40</div><div class="abs" style="left:915px;top:148px;width:1px;height:7px;background:#5a5a5a;"></div>
<div class="rl" style="left:940px;top:133px;"><span style="letter-spacing:-1.3px;margin-left:-0.4px">1</span>50</div><div class="abs" style="left:955px;top:148px;width:1px;height:7px;background:#5a5a5a;"></div>
<div class="rl" style="left:980px;top:133px;"><span style="letter-spacing:-1.3px;margin-left:-0.4px">1</span>60</div><div class="abs" style="left:995px;top:148px;width:1px;height:7px;background:#5a5a5a;"></div>
<div class="rl" style="left:1020px;top:133px;"><span style="letter-spacing:-1.3px;margin-left:-0.4px">1</span>70</div><div class="abs" style="left:1035px;top:148px;width:1px;height:7px;background:#5a5a5a;"></div>
<div class="rl" style="left:1060px;top:133px;"><span style="letter-spacing:-1.3px;margin-left:-0.4px">1</span>80</div><div class="abs" style="left:1075px;top:148px;width:1px;height:7px;background:#5a5a5a;"></div>
<div class="rl" style="left:1100px;top:133px;"><span style="letter-spacing:-1.3px;margin-left:-0.4px">1</span>90</div><div class="abs" style="left:1115px;top:148px;width:1px;height:7px;background:#5a5a5a;"></div>
<svg style="left:154px;top:145px" width="13" height="7" viewBox="0 0 13 7"><path d="M0.3 0H12.1L6.2 6.4Z" fill="#000"/></svg>
<div class="abs" style="left:72px;top:155px;width:23px;height:577px;overflow:hidden;"><div class="rv" style="left:-9.200000000000003px;top:552px;">-60</div><div class="abs" style="left:16px;top:557px;width:7px;height:1px;background:#5a5a5a;"></div>
<div class="rv" style="left:-9.200000000000003px;top:512px;">-50</div><div class="abs" style="left:16px;top:517px;width:7px;height:1px;background:#5a5a5a;"></div>
<div class="rv" style="left:-9.200000000000003px;top:472px;">-40</div><div class="abs" style="left:16px;top:477px;width:7px;height:1px;background:#5a5a5a;"></div>
<div class="rv" style="left:-9.200000000000003px;top:432px;">-30</div><div class="abs" style="left:16px;top:437px;width:7px;height:1px;background:#5a5a5a;"></div>
<div class="rv" style="left:-9.200000000000003px;top:392px;">-20</div><div class="abs" style="left:16px;top:397px;width:7px;height:1px;background:#5a5a5a;"></div>
<div class="rv" style="left:-9.200000000000003px;top:352px;">-<span style="letter-spacing:-1.3px;margin-left:-0.4px">1</span>0</div><div class="abs" style="left:16px;top:357px;width:7px;height:1px;background:#5a5a5a;"></div>
<div class="rv" style="left:-9.200000000000003px;top:312px;">0</div><div class="abs" style="left:16px;top:317px;width:7px;height:1px;background:#5a5a5a;"></div>
<div class="rv" style="left:-9.200000000000003px;top:272px;"><span style="letter-spacing:-1.3px;margin-left:-0.4px">1</span>0</div><div class="abs" style="left:16px;top:277px;width:7px;height:1px;background:#5a5a5a;"></div>
<div class="rv" style="left:-9.200000000000003px;top:232px;">20</div><div class="abs" style="left:16px;top:237px;width:7px;height:1px;background:#5a5a5a;"></div>
<div class="rv" style="left:-9.200000000000003px;top:192px;">30</div><div class="abs" style="left:16px;top:197px;width:7px;height:1px;background:#5a5a5a;"></div>
<div class="rv" style="left:-9.200000000000003px;top:152px;">40</div><div class="abs" style="left:16px;top:157px;width:7px;height:1px;background:#5a5a5a;"></div>
<div class="rv" style="left:-9.200000000000003px;top:112px;">50</div><div class="abs" style="left:16px;top:117px;width:7px;height:1px;background:#5a5a5a;"></div>
<div class="rv" style="left:-9.200000000000003px;top:72px;">60</div><div class="abs" style="left:16px;top:77px;width:7px;height:1px;background:#5a5a5a;"></div>
<div class="rv" style="left:-9.200000000000003px;top:32px;">70</div><div class="abs" style="left:16px;top:37px;width:7px;height:1px;background:#5a5a5a;"></div>
<div class="rv" style="left:-9.200000000000003px;top:-8px;">80</div><div class="abs" style="left:16px;top:-3px;width:7px;height:1px;background:#5a5a5a;"></div>
</div>
<svg style="left:84.6px;top:329px" width="8" height="14" viewBox="0 0 8 14"><path d="M0.3 0.8V13L6.6 6.9Z" fill="#000"/></svg>
<svg style="left:95px;top:155px;background:#000" width="1043" height="577" viewBox="95 155 1043 577" shape-rendering="auto">
<defs><pattern id="grid" x="335" y="452" width="40" height="40" patternUnits="userSpaceOnUse"><rect x="20" y="20" width="1" height="1" fill="#5e5e5e"/></pattern><clipPath id="cv"><rect x="95" y="155" width="1043" height="577"/></clipPath></defs>
<g clip-path="url(#cv)">
<rect x="95" y="155" width="1043" height="577" fill="url(#grid)"/>
<rect x="354.5" y="155" width="1" height="577" fill="#2a2a2a"/>
<rect x="754.5" y="155" width="1" height="577" fill="#2a2a2a"/>
<rect x="95" y="471.5" width="1043" height="1" fill="#2a2a2a"/>
<path d="M274.7 472.0H435.3" stroke="#b01414" stroke-width="1" stroke-dasharray="7.4 2.5 1 2.5" stroke-dashoffset="2.7" fill="none"/>
<path d="M355.0 391.7V552.3" stroke="#b01414" stroke-width="1" stroke-dasharray="7.4 2.5 1 2.5" stroke-dashoffset="2.7" fill="none"/>
<path d="M452.7 472.0H851" stroke="#b01414" stroke-width="1" stroke-dasharray="7.4 2.5 1 2.5" stroke-dashoffset="2.7" fill="none"/>
<circle cx="355.0" cy="472.0" r="5" stroke="#c81414" stroke-width="1" fill="none"/>
<path d="M350.0 472.0H360.0M355.0 467.0V477.0" stroke="#b01414" stroke-width="1"/>
<path d="M355.00 409.60 L409.04 440.80 L409.04 503.20 L355.00 534.40 L300.96 503.20 L300.96 440.80Z" stroke="#f0f0f0" stroke-width="1.25" fill="none"/>
<circle cx="355.0" cy="472.0" r="54.0" stroke="#f0f0f0" stroke-width="1.25" fill="none"/>
<circle cx="355.0" cy="472.0" r="36.3" stroke="#c8c8c8" stroke-width="1" fill="none"/>
<path d="M355.0 437.6 A34.4 34.4 0 1 1 320.6 472.0" stroke="#c8c8c8" stroke-width="1" fill="none"/>
<path d="M473.4 409.6H515.0V534.4H473.4" stroke="#f0f0f0" stroke-width="1.25" fill="none"/>
<path d="M473.4 440.8H515.0M473.4 503.2H515.0" stroke="#f0f0f0" stroke-width="1.25" fill="none"/>
<path d="M473.4 409.6 Q463.6 425.20000000000005 473.4 440.8 Q464.40000000000003 472.0 473.4 503.2 Q463.6 518.8 473.4 534.4" stroke="#f0f0f0" stroke-width="1.25" fill="none"/>
<path d="M515.0 436.0H829.0L836.0 442.5V501.5L829.0 508.0H515.0" stroke="#f0f0f0" stroke-width="1.25" fill="none"/>
<path d="M639 436.0L667.5 441.8H836.0M639 508.0L667.5 502.2H836.0" stroke="#c8c8c8" stroke-width="1" fill="none" opacity="0.62"/>
<path d="M667.5 436.0V508.0M829.0 436.0V508.0" stroke="#c8c8c8" stroke-width="1" fill="none" opacity="0.62"/>
</g></svg>
<div class="abs" style="left:1138px;top:155px;width:15px;height:577px;background:#fafafa;border-left:1px solid #e8e8e8;box-sizing:border-box;"></div>
<div class="abs" style="left:1143.1px;top:255.2px;width:7.8px;height:342.4px;border-radius:4px;background:#7e7e7e;"></div>
<div class="abs" style="left:72px;top:732px;width:23px;height:17px;background:#ececec;"></div><div class="abs" style="left:95px;top:732px;width:1058px;height:17px;background:#fafafa;border-top:1px solid #efefef;box-sizing:border-box;"></div>
<div class="abs" style="left:255.3px;top:737.2px;width:743.6px;height:7.5px;border-radius:4px;background:#7f7f7f;"></div>
<div class="abs" style="left:1083px;top:732px;width:70px;height:16px;background:#ececec;"></div>
<div class="abs" id="gridinfo" style="left:1083px;top:733px;width:70px;text-align:right;font-size:13px;line-height:15px;color:#111;white-space:nowrap;letter-spacing:-0.059px;">10 &lt; 100</div>
<div class="abs" style="left:1153.6px;top:108px;width:2px;height:690px;background:#efefef;"></div>
<div class="abs" style="left:72px;top:748px;width:1081px;height:50px;background:#ececec;"></div>
<div class="abs" style="left:72px;top:748.3px;width:1081px;height:22.5px;background:#fff;border:1px solid #c4c4c4;border-top:1.5px solid #bcbcbc;border-left:none;box-sizing:border-box;"></div>
<div class="abs" id="hist" style="left:77px;top:750.5px;font-size:13px;line-height:15px;color:#0000e0;white-space:nowrap;letter-spacing:0.142px;"><i>Comando:</i> dimensionmenu</div>
<div class="abs" id="cmdl" style="left:73px;top:778px;font-size:13px;line-height:15px;color:#111;white-space:nowrap;letter-spacing:0.064px;">Comando:</div>
<div class="abs" style="left:138px;top:776px;width:988px;height:18px;background:#fff;"></div>
<div class="abs" style="left:1127px;top:772px;width:26px;height:25px;box-sizing:border-box;border:1px solid #b4b4b4;background:linear-gradient(#fafafa,#e8e8e8);"></div>
<svg style="left:1133px;top:779.6px" width="16" height="12" viewBox="0 0 16 12"><rect x="0.5" y="0.5" width="13" height="9.4" fill="#fff" stroke="#222" stroke-width="1"/><rect x="0.5" y="0.5" width="13" height="2.6" fill="#111"/></svg>
<div class="abs" style="left:1155px;top:108px;width:300px;height:690px;background:#ececec;"></div>
<div class="abs" style="left:1155px;top:108px;width:300px;height:22px;background:linear-gradient(#eeeeee,#e6e6e6 60%,#dadada);"></div>
<div class="abs" id="ltitle" style="left:1222.6px;top:112.4px;width:200px;text-align:center;font-size:11.5px;line-height:14px;color:#1c1c1c;-webkit-text-stroke:0.15px #1c1c1c;letter-spacing:0.116px;white-space:nowrap;">Lista de capas</div>
<svg style="left:1156px;top:110px" width="36" height="16" viewBox="0 0 36 16"><circle cx="8" cy="8" r="6.9" fill="#5a5a5a"/><path d="M5 5 L11 11 M11 5 L5 11" stroke="#e6e6e6" stroke-width="2.3"/><circle cx="25.9" cy="8" r="6.9" fill="#5a5a5a"/><rect x="24.6" y="4.6" width="5.4" height="4.4" fill="none" stroke="#e6e6e6" stroke-width="1.3"/><rect x="22" y="7" width="5.4" height="4.4" fill="#5a5a5a" stroke="#e6e6e6" stroke-width="1.3"/></svg>
<div class="abs" style="left:1155px;top:130px;width:300px;height:27px;background:#a4a4a4;"></div>
<div class="abs" style="left:1155.6px;top:131px;width:58.8px;height:24.6px;background:linear-gradient(#f0f0f0,#ebebeb 40%,#f6f6f6);box-shadow:inset 0 0 0 1px rgba(255,255,255,0.55);"></div><div class="abs" style="left:1215.6px;top:131px;width:58.8px;height:24.6px;background:linear-gradient(#f0f0f0,#ebebeb 40%,#f6f6f6);box-shadow:inset 0 0 0 1px rgba(255,255,255,0.55);"></div><div class="abs" style="left:1275.6px;top:131px;width:58.8px;height:24.6px;background:linear-gradient(#f0f0f0,#ebebeb 40%,#f6f6f6);box-shadow:inset 0 0 0 1px rgba(255,255,255,0.55);"></div><div class="abs" style="left:1335.6px;top:131px;width:58.8px;height:24.6px;background:linear-gradient(#f0f0f0,#ebebeb 40%,#f6f6f6);box-shadow:inset 0 0 0 1px rgba(255,255,255,0.55);"></div><div class="abs" style="left:1395.6px;top:131px;width:58.8px;height:24.6px;background:linear-gradient(#f0f0f0,#ebebeb 40%,#f6f6f6);box-shadow:inset 0 0 0 1px rgba(255,255,255,0.55);"></div>
<svg style="left:0;top:0" width="1500" height="160" viewBox="0 0 1500 160"><g transform="translate(1177.4 137.4)"><path d="M0.2 5.4 C2.4 1.4 5.8 0.2 7.6 0.2 C10.6 0.2 13.4 2.4 14.8 5.2 C13.8 8.4 10.8 10.6 7.4 10.6 C4.4 10.6 1.4 8.6 0.2 5.4 Z" fill="#000"/><path d="M2.7 6.1 C3.9 4.3 5.8 3.5 7.5 3.5 C9.4 3.5 11.3 4.3 12.4 6 C11.4 7.9 9.6 8.7 7.5 8.7 C5.4 8.7 3.7 7.9 2.7 6.1 Z" fill="#fff"/><circle cx="7.5" cy="5.5" r="2.8" fill="#000"/><circle cx="6.7" cy="4.6" r="0.75" fill="#fff"/><path d="M1.4 8.6 L0.6 9.6 M3.6 10 L3.2 11 M11.4 10 L11.8 11 M13.6 8.6 L14.4 9.6" stroke="#000" stroke-width="0.8"/></g><g transform="translate(1237.4 137.4)"><path d="M0.2 5.4 C2.4 1.4 5.8 0.2 7.6 0.2 C10.6 0.2 13.4 2.4 14.8 5.2 C13.8 8.4 10.8 10.6 7.4 10.6 C4.4 10.6 1.4 8.6 0.2 5.4 Z" fill="#a9a9a9"/><path d="M2.7 6.1 C3.9 4.3 5.8 3.5 7.5 3.5 C9.4 3.5 11.3 4.3 12.4 6 C11.4 7.9 9.6 8.7 7.5 8.7 C5.4 8.7 3.7 7.9 2.7 6.1 Z" fill="#fff"/><circle cx="7.5" cy="5.5" r="2.8" fill="#a9a9a9"/><circle cx="6.7" cy="4.6" r="0.75" fill="#ddd"/><path d="M1.4 8.6 L0.6 9.6 M3.6 10 L3.2 11 M11.4 10 L11.8 11 M13.6 8.6 L14.4 9.6" stroke="#a9a9a9" stroke-width="0.8"/></g><path d="M1304.8 137.2 V148.6 M1299.1 142.9 H1310.5" stroke="#6a0000" stroke-width="3.4"/><path d="M1304.8 137.7 V148.1 M1299.6 142.9 H1310" stroke="#f40000" stroke-width="2.4"/><rect x="1358.8" y="141.1" width="12.2" height="3.8" fill="#f40000" stroke="#6a0000" stroke-width="0.8"/><g transform="translate(1417.8 149.8) rotate(-44.60)"><path d="M0 0 L3.6 -1.5 V1.5 Z" fill="#e9cf9c"/><path d="M0 0 L1.3 -0.55 V0.55 Z" fill="#4a3a20"/><rect x="3.6" y="-1.5" width="13.62" height="3" fill="#e8a63c"/><rect x="3.6" y="-1.5" width="13.62" height="1.1" fill="#f4c060"/><rect x="3.6" y="0.7" width="13.62" height="0.8" fill="#b8741c"/><rect x="17.02" y="-1.6" width="3.2" height="3.2" rx="1" fill="#e22a2a"/><rect x="16.42" y="-1.5" width="0.8" height="3" fill="#c8c8c8"/></g></svg>
<div class="abs" style="left:1155px;top:157px;width:300px;height:641px;background:#fff;border-left:1px solid #b9b9b9;border-right:1px solid #b9b9b9;box-sizing:border-box;"></div>
<div class="sw" style="top:163.2px;background:#fff;"></div><div class="lay" id="lay0" style="top:157px;letter-spacing:-0.316px;">0</div>
<div class="sw" style="top:183.2px;background:#0096ff;"></div><div class="lay" id="lay1" style="top:177px;letter-spacing:-0.086px;">Acotaciones</div>
<div class="sw" style="top:203.2px;background:#ff0000;"></div><div class="lay" id="lay2" style="top:197px;letter-spacing:-0.155px;">Centro</div>
<div class="sw" style="top:223.2px;background:#fff;"></div><div class="lay" id="lay3" style="top:217px;letter-spacing:0.006px;">Defpoints</div>
<div class="sw" style="top:243.2px;background:#000;"></div><div class="lay" id="lay4" style="top:237px;letter-spacing:-0.157px;">Delgado</div>
<div class="sw" style="top:263.2px;background:#000;"></div><div class="lay" id="lay5" style="top:257px;letter-spacing:-0.09px;">Visible</div>
<svg style="left:0;top:0" width="1500" height="300" viewBox="0 0 1500 300"><g transform="translate(1415.6 161)"><path d="M0.2 5.4 C2.4 1.4 5.8 0.2 7.6 0.2 C10.6 0.2 13.4 2.4 14.8 5.2 C13.8 8.4 10.8 10.6 7.4 10.6 C4.4 10.6 1.4 8.6 0.2 5.4 Z" fill="#000"/><path d="M2.7 6.1 C3.9 4.3 5.8 3.5 7.5 3.5 C9.4 3.5 11.3 4.3 12.4 6 C11.4 7.9 9.6 8.7 7.5 8.7 C5.4 8.7 3.7 7.9 2.7 6.1 Z" fill="#fff"/><circle cx="7.5" cy="5.5" r="2.8" fill="#000"/><circle cx="6.7" cy="4.6" r="0.75" fill="#fff"/><path d="M1.4 8.6 L0.6 9.6 M3.6 10 L3.2 11 M11.4 10 L11.8 11 M13.6 8.6 L14.4 9.6" stroke="#000" stroke-width="0.8"/></g><g transform="translate(1440.2 160.4)"><path d="M1.9 6.4 V4.2 A3 3.4 0 0 1 7.9 4.2 V6.4" fill="none" stroke="#cdcdcd" stroke-width="1.3"/><rect x="0.2" y="6.2" width="9.4" height="6.9" fill="#b3b3b3"/></g><g transform="translate(1415.6 181)"><path d="M0.2 5.4 C2.4 1.4 5.8 0.2 7.6 0.2 C10.6 0.2 13.4 2.4 14.8 5.2 C13.8 8.4 10.8 10.6 7.4 10.6 C4.4 10.6 1.4 8.6 0.2 5.4 Z" fill="#000"/><path d="M2.7 6.1 C3.9 4.3 5.8 3.5 7.5 3.5 C9.4 3.5 11.3 4.3 12.4 6 C11.4 7.9 9.6 8.7 7.5 8.7 C5.4 8.7 3.7 7.9 2.7 6.1 Z" fill="#fff"/><circle cx="7.5" cy="5.5" r="2.8" fill="#000"/><circle cx="6.7" cy="4.6" r="0.75" fill="#fff"/><path d="M1.4 8.6 L0.6 9.6 M3.6 10 L3.2 11 M11.4 10 L11.8 11 M13.6 8.6 L14.4 9.6" stroke="#000" stroke-width="0.8"/></g><g transform="translate(1440.2 180.4)"><path d="M1.9 6.4 V4.2 A3 3.4 0 0 1 7.9 4.2 V6.4" fill="none" stroke="#cdcdcd" stroke-width="1.3"/><rect x="0.2" y="6.2" width="9.4" height="6.9" fill="#b3b3b3"/></g><g transform="translate(1394.6 193.6) rotate(-44.58)"><path d="M0 0 L3.6 -1.5 V1.5 Z" fill="#e9cf9c"/><path d="M0 0 L1.3 -0.55 V0.55 Z" fill="#4a3a20"/><rect x="3.6" y="-1.5" width="12.49" height="3" fill="#e8a63c"/><rect x="3.6" y="-1.5" width="12.49" height="1.1" fill="#f4c060"/><rect x="3.6" y="0.7" width="12.49" height="0.8" fill="#b8741c"/><rect x="15.89" y="-1.6" width="3.2" height="3.2" rx="1" fill="#e22a2a"/><rect x="15.29" y="-1.5" width="0.8" height="3" fill="#c8c8c8"/></g><g transform="translate(1415.6 201)"><path d="M0.2 5.4 C2.4 1.4 5.8 0.2 7.6 0.2 C10.6 0.2 13.4 2.4 14.8 5.2 C13.8 8.4 10.8 10.6 7.4 10.6 C4.4 10.6 1.4 8.6 0.2 5.4 Z" fill="#000"/><path d="M2.7 6.1 C3.9 4.3 5.8 3.5 7.5 3.5 C9.4 3.5 11.3 4.3 12.4 6 C11.4 7.9 9.6 8.7 7.5 8.7 C5.4 8.7 3.7 7.9 2.7 6.1 Z" fill="#fff"/><circle cx="7.5" cy="5.5" r="2.8" fill="#000"/><circle cx="6.7" cy="4.6" r="0.75" fill="#fff"/><path d="M1.4 8.6 L0.6 9.6 M3.6 10 L3.2 11 M11.4 10 L11.8 11 M13.6 8.6 L14.4 9.6" stroke="#000" stroke-width="0.8"/></g><g transform="translate(1440.2 200.4)"><path d="M1.9 6.4 V4.2 A3 3.4 0 0 1 7.9 4.2 V6.4" fill="none" stroke="#cdcdcd" stroke-width="1.3"/><rect x="0.2" y="6.2" width="9.4" height="6.9" fill="#b3b3b3"/></g><g transform="translate(1415.6 221)"><path d="M0.2 5.4 C2.4 1.4 5.8 0.2 7.6 0.2 C10.6 0.2 13.4 2.4 14.8 5.2 C13.8 8.4 10.8 10.6 7.4 10.6 C4.4 10.6 1.4 8.6 0.2 5.4 Z" fill="#000"/><path d="M2.7 6.1 C3.9 4.3 5.8 3.5 7.5 3.5 C9.4 3.5 11.3 4.3 12.4 6 C11.4 7.9 9.6 8.7 7.5 8.7 C5.4 8.7 3.7 7.9 2.7 6.1 Z" fill="#fff"/><circle cx="7.5" cy="5.5" r="2.8" fill="#000"/><circle cx="6.7" cy="4.6" r="0.75" fill="#fff"/><path d="M1.4 8.6 L0.6 9.6 M3.6 10 L3.2 11 M11.4 10 L11.8 11 M13.6 8.6 L14.4 9.6" stroke="#000" stroke-width="0.8"/></g><g transform="translate(1440.2 220.4)"><path d="M1.9 6.4 V4.2 A3 3.4 0 0 1 7.9 4.2 V6.4" fill="none" stroke="#cdcdcd" stroke-width="1.3"/><rect x="0.2" y="6.2" width="9.4" height="6.9" fill="#b3b3b3"/></g><g transform="translate(1415.6 241)"><path d="M0.2 5.4 C2.4 1.4 5.8 0.2 7.6 0.2 C10.6 0.2 13.4 2.4 14.8 5.2 C13.8 8.4 10.8 10.6 7.4 10.6 C4.4 10.6 1.4 8.6 0.2 5.4 Z" fill="#000"/><path d="M2.7 6.1 C3.9 4.3 5.8 3.5 7.5 3.5 C9.4 3.5 11.3 4.3 12.4 6 C11.4 7.9 9.6 8.7 7.5 8.7 C5.4 8.7 3.7 7.9 2.7 6.1 Z" fill="#fff"/><circle cx="7.5" cy="5.5" r="2.8" fill="#000"/><circle cx="6.7" cy="4.6" r="0.75" fill="#fff"/><path d="M1.4 8.6 L0.6 9.6 M3.6 10 L3.2 11 M11.4 10 L11.8 11 M13.6 8.6 L14.4 9.6" stroke="#000" stroke-width="0.8"/></g><g transform="translate(1440.2 240.4)"><path d="M1.9 6.4 V4.2 A3 3.4 0 0 1 7.9 4.2 V6.4" fill="none" stroke="#cdcdcd" stroke-width="1.3"/><rect x="0.2" y="6.2" width="9.4" height="6.9" fill="#b3b3b3"/></g><g transform="translate(1415.6 261)"><path d="M0.2 5.4 C2.4 1.4 5.8 0.2 7.6 0.2 C10.6 0.2 13.4 2.4 14.8 5.2 C13.8 8.4 10.8 10.6 7.4 10.6 C4.4 10.6 1.4 8.6 0.2 5.4 Z" fill="#000"/><path d="M2.7 6.1 C3.9 4.3 5.8 3.5 7.5 3.5 C9.4 3.5 11.3 4.3 12.4 6 C11.4 7.9 9.6 8.7 7.5 8.7 C5.4 8.7 3.7 7.9 2.7 6.1 Z" fill="#fff"/><circle cx="7.5" cy="5.5" r="2.8" fill="#000"/><circle cx="6.7" cy="4.6" r="0.75" fill="#fff"/><path d="M1.4 8.6 L0.6 9.6 M3.6 10 L3.2 11 M11.4 10 L11.8 11 M13.6 8.6 L14.4 9.6" stroke="#000" stroke-width="0.8"/></g><g transform="translate(1440.2 260.4)"><path d="M1.9 6.4 V4.2 A3 3.4 0 0 1 7.9 4.2 V6.4" fill="none" stroke="#cdcdcd" stroke-width="1.3"/><rect x="0.2" y="6.2" width="9.4" height="6.9" fill="#b3b3b3"/></g></svg>
<div class="abs" style="left:1455px;top:108px;width:45px;height:690px;background:linear-gradient(90deg,#f0f0f0 0,#e6e6e6 25%,#d2d2d2 70%,#c2c2c2 100%);"></div>
<div class="abs" style="left:1462px;top:116px;width:2px;height:2px;background:#909090;"></div><div class="abs" style="left:1468px;top:116px;width:2px;height:2px;background:#909090;"></div><div class="abs" style="left:1474px;top:116px;width:2px;height:2px;background:#909090;"></div><div class="abs" style="left:1480px;top:116px;width:2px;height:2px;background:#909090;"></div><div class="abs" style="left:1486px;top:116px;width:2px;height:2px;background:#909090;"></div>
<div class="abs" style="left:1456px;top:120px;width:46px;height:43px;border-radius:6px;background:#b5b5b5;"></div>
<div class="abs" style="left:1456px;top:417px;width:46px;height:43px;border-radius:6px;background:#b5b5b5;"></div>
<div class="hdots" style="left:1458px;top:261px;width:42px;"></div><div class="hdots" style="left:1458px;top:409px;width:42px;"></div>
<svg style="left:0;top:0" width="1500" height="520" viewBox="0 0 1500 520"><g transform="translate(1463.2 127.3)"><rect x="0.5" y="0.5" width="26.6" height="26.6" fill="#fff" stroke="#454545" stroke-width="1"/><rect x="0" y="0" width="27.6" height="4.6" fill="#000"/><rect x="1.2" y="0.9" width="3.4" height="3.2" fill="#fff"/><path d="M7 15.6 L15.6 11.8 V19.6 L7 23.4 Z" fill="#d0d0d0" stroke="#555" stroke-width="0.7"/><path d="M9.4 14.4 L18 10.6 V18.6 L9.4 22.4 Z" fill="#e4e4e4" stroke="#555" stroke-width="0.7"/><path d="M12 13.2 L20.6 9.2 V17.6 L12 21.6 Z" fill="#fff" stroke="#555" stroke-width="0.7"/><path d="M14 19 L18.6 11.6 L18.4 17.4 Z" fill="none" stroke="#e33" stroke-width="0.8" stroke-dasharray="1.6 0.7"/></g><g transform="translate(1463.2 174.3)"><rect x="0.5" y="0.5" width="26.6" height="26.6" fill="#fff" stroke="#454545" stroke-width="1"/><rect x="0" y="0" width="27.6" height="4.6" fill="#000"/><rect x="1.2" y="0.9" width="3.4" height="3.2" fill="#fff"/><rect x="7.3" y="10" width="10.4" height="7.4" fill="#f6edc4" stroke="#555" stroke-width="0.8"/><circle cx="16.4" cy="17" r="4.3" fill="#f6edc4" fill-opacity="0.85" stroke="#555" stroke-width="0.8"/></g><g transform="translate(1463.2 220.2)"><rect x="0.5" y="0.5" width="26.6" height="26.6" fill="#fff" stroke="#454545" stroke-width="1"/><rect x="0" y="0" width="27.6" height="4.6" fill="#000"/><rect x="1.2" y="0.9" width="3.4" height="3.2" fill="#fff"/><rect x="5.2" y="9.4" width="17.2" height="12.2" rx="2.2" fill="#f1f1f1" stroke="#bfd0ea" stroke-width="1.1"/></g><g transform="translate(1463.2 276)"><rect x="0.5" y="0.5" width="26.6" height="26.6" fill="#fff" stroke="#454545" stroke-width="1"/><rect x="0" y="0" width="27.6" height="4.6" fill="#000"/><rect x="1.2" y="0.9" width="3.4" height="3.2" fill="#fff"/><rect x="3.8" y="8.6" width="4" height="3.4" fill="#000"/><rect x="10.4" y="8.6" width="13.4" height="3.4" fill="#fff" stroke="#444" stroke-width="0.7"/><rect x="3.8" y="15.0" width="4" height="3.4" fill="#000"/><rect x="10.4" y="15.0" width="13.4" height="3.4" fill="#fff" stroke="#444" stroke-width="0.7"/><rect x="3.8" y="21.4" width="4" height="3.4" fill="#000"/><rect x="10.4" y="21.4" width="13.4" height="3.4" fill="#fff" stroke="#444" stroke-width="0.7"/></g><g transform="translate(1463.2 321.8)"><rect x="0.5" y="0.5" width="26.6" height="26.6" fill="#fff" stroke="#454545" stroke-width="1"/><rect x="0" y="0" width="27.6" height="4.6" fill="#000"/><rect x="1.2" y="0.9" width="3.4" height="3.2" fill="#fff"/><path d="M6.4 9.6 H21.2 L15.6 16 V22.6 L12.2 20.6 V16 Z" fill="#9a9a9a" stroke="#4a4a4a" stroke-width="0.8" stroke-linejoin="round"/><ellipse cx="13.8" cy="9.6" rx="7.4" ry="1.7" fill="#d8d8d8" stroke="#4a4a4a" stroke-width="0.8"/></g><g transform="translate(1463.2 367.8)"><rect x="0.5" y="0.5" width="26.6" height="26.6" fill="#fff" stroke="#454545" stroke-width="1"/><rect x="0" y="0" width="27.6" height="4.6" fill="#000"/><rect x="1.2" y="0.9" width="3.4" height="3.2" fill="#fff"/><path d="M6 8.8 L11.6 12 V20.2 L6 23.4 Z" fill="#fff" stroke="#222" stroke-width="0.9"/><rect x="11.6" y="12" width="10" height="8.2" rx="1.4" fill="#8f8f8f" stroke="#555" stroke-width="0.6"/><path d="M4 16.1 H24" stroke="#e44" stroke-width="0.6" stroke-dasharray="2.4 1 0.6 1"/></g><g transform="translate(1463.2 423.9)"><rect x="0.5" y="0.5" width="26.6" height="26.6" fill="#fff" stroke="#454545" stroke-width="1"/><rect x="0" y="0" width="27.6" height="4.6" fill="#000"/><rect x="1.2" y="0.9" width="3.4" height="3.2" fill="#fff"/><text x="2.4" y="10.4" font-size="2.6" font-family="Liberation Sans, sans-serif" fill="#333">Command: line</text><text x="2.4" y="13.600000000000001" font-size="2.6" font-family="Liberation Sans, sans-serif" fill="#333">Command: line</text><text x="2.4" y="16.8" font-size="2.6" font-family="Liberation Sans, sans-serif" fill="#333">Coordinate: 10,10</text><text x="2.4" y="20.0" font-size="2.6" font-family="Liberation Sans, sans-serif" fill="#333">Coordinate: 50,100</text><path d="M0.5 23.2 H27" stroke="#222" stroke-width="0.7"/><text x="2" y="26.4" font-size="3.2" font-family="Liberation Sans, sans-serif" fill="#111">C</text><text x="9.6" y="26.4" font-size="3.4" font-family="Liberation Sans, sans-serif" fill="#111">command</text></g><g transform="translate(1463.2 471)"><rect x="0.5" y="0.5" width="26.6" height="26.6" fill="#fff" stroke="#454545" stroke-width="1"/><rect x="0" y="0" width="27.6" height="4.6" fill="#000"/><rect x="1.2" y="0.9" width="3.4" height="3.2" fill="#fff"/><rect x="6.6" y="7.8" width="14.6" height="16.4" rx="1" fill="#c08a3c" stroke="#8c5a18" stroke-width="0.6"/><rect x="8.4" y="10" width="11" height="12.6" fill="#f4f4f4"/><path d="M10 13h7.6M10 15.2h7.6M10 17.4h7.6M10 19.6h4.6" stroke="#c8c8c8" stroke-width="0.7"/><path d="M19.4 19.4 V22.6 H16.2 Z" fill="#999"/><rect x="10.6" y="6.4" width="6.6" height="3.4" rx="0.8" fill="#a2a296" stroke="#75756c" stroke-width="0.5"/></g></svg>
<div class="abs" style="left:0;top:798px;width:1500px;height:46px;background:#dcdcdc;"></div>
<div class="st" id="s1" style="left:2px;top:806.8px;letter-spacing:0.359px;">-48.75,34</div>
<div class="st" id="s2" style="left:2px;top:827.3px;letter-spacing:0.158px;">@-48.75,34</div>
<div class="st" id="s3" style="left:256px;top:806.8px;letter-spacing:0.277px;">59.4354&lt;145°</div>
<div class="st" id="s4" style="left:256px;top:827.3px;letter-spacing:0.129px;">@59.4354&lt;145°</div>
<div class="st" id="s5" style="left:568.5px;top:816.7px;letter-spacing:0.116px;">Seleccionar entidad o región</div>
<div class="st" id="s6" style="left:949px;top:816.7px;letter-spacing:0.088px;">No hay entidades seleccionadas.</div>
<div class="abs" style="left:253px;top:802px;width:1px;height:40px;background:#6e6e6e;"></div>
<div class="abs" style="left:506px;top:819px;width:6px;height:6px;border-radius:3px;background:#cbcbcb;"></div><div class="abs" style="left:940px;top:819px;width:6px;height:6px;border-radius:3px;background:#cbcbcb;"></div><div class="abs" style="left:1269.5px;top:819px;width:6px;height:6px;border-radius:3px;background:#cbcbcb;"></div>
<svg style="left:716px;top:805px" width="22" height="32" viewBox="0 0 22 32"><path d="M2 11 C2 5 5.4 1.6 10.6 1.6 C15.8 1.6 19.2 5 19.2 11 V22 C19.2 27.2 15.8 30 10.6 30 C5.4 30 2 27.2 2 22 Z" fill="#fff" stroke="#222" stroke-width="1"/><path d="M2 13.6 H19.2 M10.6 1.6 V4 M10.6 10.4 V13.6" stroke="#222" stroke-width="0.9" fill="none"/><rect x="8.9" y="4" width="3.4" height="6.4" rx="1.6" fill="#fff" stroke="#222" stroke-width="0.9"/></svg>
<div class="abs" style="left:20.9px;top:175.8px;width:80.4px;height:80.4px;border-radius:50%;
background:radial-gradient(circle closest-side, rgba(255,255,255,0) 0, rgba(255,255,255,0.03) 62%, rgba(255,255,255,0.2) 74%, rgba(244,248,252,0.45) 82%, rgba(160,184,208,0.55) 85.5%, rgba(128,158,188,0.62) 89%, rgba(142,170,198,0.5) 92%, rgba(122,152,184,0.6) 95.5%, rgba(126,156,186,0.35) 98%, rgba(126,156,186,0) 100%);"></div>
<svg style="left:59.6px;top:214.5px" width="22" height="32" viewBox="-1.5 -1.5 22 32"><path d="M0 0.2 L0 22.6 L5.3 17.6 L9.8 27.6 L13.6 25.9 L9.1 16 L16.6 16 Z" fill="#fff" stroke="#000" stroke-width="1.3" stroke-linejoin="round"/></svg>
</div>
</body></html>
